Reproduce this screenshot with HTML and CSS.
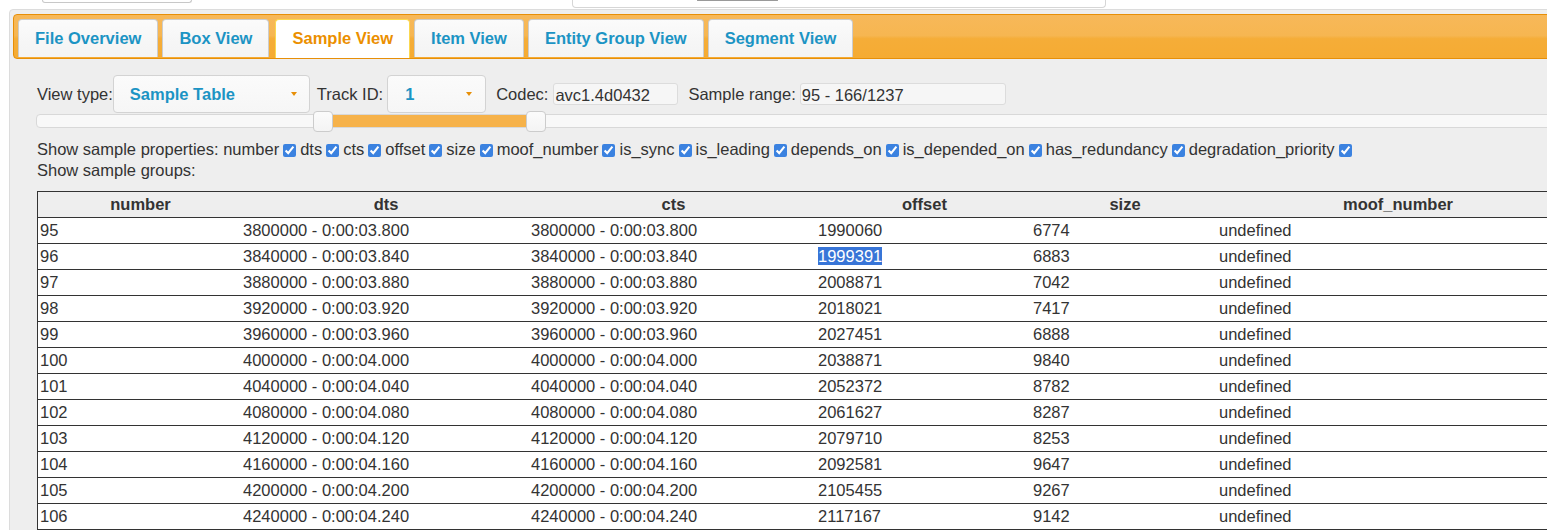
FILE: index.html
```html
<!DOCTYPE html>
<html>
<head>
<meta charset="utf-8">
<title>Sample View</title>
<link rel="stylesheet" href="styles.css">
</head>
<body>
<div class="topstrip">
  <div class="stub1"></div>
  <div class="stub2"><div class="stub2-inner"></div></div>
</div>
<div class="widget">
  <div class="tabs-header">
    <div class="tab">File Overview</div>
    <div class="tab">Box View</div>
    <div class="tab active">Sample View</div>
    <div class="tab">Item View</div>
    <div class="tab">Entity Group View</div>
    <div class="tab">Segment View</div>
  </div>
  <div class="panel">
    <div class="controls">
      <span class="lbl">View type:</span>
      <div class="select sel-view"><span>Sample Table</span><span class="tri"></span></div>
      <span class="lbl lbl-track">Track ID:</span>
      <div class="select sel-track"><span>1</span><span class="tri"></span></div>
      <span class="lbl lbl-codec">Codec:</span>
      <div class="field f-codec">avc1.4d0432</div>
      <span class="lbl lbl-range">Sample range:</span>
      <div class="field f-range">95 - 166/1237</div>
    </div>
    <div class="slider">
      <div class="sl-pre"></div>
      <div class="handle"></div>
      <div class="sl-range"></div>
      <div class="handle"></div>
    </div>
    <div class="props">
      <div class="prop-line">Show sample properties: <span>number<input type="checkbox" checked></span><span>dts<input type="checkbox" checked></span><span>cts<input type="checkbox" checked></span><span>offset<input type="checkbox" checked></span><span>size<input type="checkbox" checked></span><span>moof_number<input type="checkbox" checked></span><span>is_sync<input type="checkbox" checked></span><span>is_leading<input type="checkbox" checked></span><span>depends_on<input type="checkbox" checked></span><span>is_depended_on<input type="checkbox" checked></span><span>has_redundancy<input type="checkbox" checked></span><span>degradation_priority<input type="checkbox" checked></span></div>
      <div class="prop-line">Show sample groups:</div>
    </div>
    <table class="samples">
      <thead>
        <tr><th class="c-num">number</th><th class="c-dts">dts</th><th class="c-cts">cts</th><th class="c-off">offset</th><th class="c-size">size</th><th class="c-moof">moof_number</th></tr>
      </thead>
      <tbody>
        <tr><td>95</td><td>3800000 - 0:00:03.800</td><td>3800000 - 0:00:03.800</td><td>1990060</td><td>6774</td><td>undefined</td></tr>
        <tr><td>96</td><td>3840000 - 0:00:03.840</td><td>3840000 - 0:00:03.840</td><td><span class="sel">1999391</span></td><td>6883</td><td>undefined</td></tr>
        <tr><td>97</td><td>3880000 - 0:00:03.880</td><td>3880000 - 0:00:03.880</td><td>2008871</td><td>7042</td><td>undefined</td></tr>
        <tr><td>98</td><td>3920000 - 0:00:03.920</td><td>3920000 - 0:00:03.920</td><td>2018021</td><td>7417</td><td>undefined</td></tr>
        <tr><td>99</td><td>3960000 - 0:00:03.960</td><td>3960000 - 0:00:03.960</td><td>2027451</td><td>6888</td><td>undefined</td></tr>
        <tr><td>100</td><td>4000000 - 0:00:04.000</td><td>4000000 - 0:00:04.000</td><td>2038871</td><td>9840</td><td>undefined</td></tr>
        <tr><td>101</td><td>4040000 - 0:00:04.040</td><td>4040000 - 0:00:04.040</td><td>2052372</td><td>8782</td><td>undefined</td></tr>
        <tr><td>102</td><td>4080000 - 0:00:04.080</td><td>4080000 - 0:00:04.080</td><td>2061627</td><td>8287</td><td>undefined</td></tr>
        <tr><td>103</td><td>4120000 - 0:00:04.120</td><td>4120000 - 0:00:04.120</td><td>2079710</td><td>8253</td><td>undefined</td></tr>
        <tr><td>104</td><td>4160000 - 0:00:04.160</td><td>4160000 - 0:00:04.160</td><td>2092581</td><td>9647</td><td>undefined</td></tr>
        <tr><td>105</td><td>4200000 - 0:00:04.200</td><td>4200000 - 0:00:04.200</td><td>2105455</td><td>9267</td><td>undefined</td></tr>
        <tr><td>106</td><td>4240000 - 0:00:04.240</td><td>4240000 - 0:00:04.240</td><td>2117167</td><td>9142</td><td>undefined</td></tr>
      </tbody>
    </table>
  </div>
</div>
</body>
</html>
```
FILE: styles.css
```css
html, body {
  margin: 0;
  padding: 0;
}
body {
  width: 1547px;
  height: 530px;
  overflow: hidden;
  background: #fff;
  font-family: "Liberation Sans", Arial, sans-serif;
  font-size: 16.5px;
  color: #333;
}
.topstrip {
  height: 9px;
  display: flex;
  align-items: flex-start;
}
.stub1 {
  margin-left: 42px;
  width: 148px;
  height: 2px;
  border: 1px solid #c8c8c8;
  border-top: none;
  border-radius: 0 0 4px 4px;
}
.stub2 {
  margin-left: 380px;
  width: 532px;
  height: 7px;
  border: 1px solid #d6d6d6;
  border-top: none;
  border-radius: 0 0 4px 4px;
  display: flex;
  align-items: flex-start;
}
.stub2-inner {
  margin-left: 124px;
  width: 79px;
  height: 0;
  border: 1px solid #999;
  border-top: none;
  border-radius: 0 0 2px 2px;
}
.widget {
  margin-left: 9px;
  width: 1700px;
  height: 560px;
  border: 1px solid #dcdcdc;
  border-radius: 4px;
  background: #eee;
  padding: 4px 0 0 3px;
}
.tabs-header {
  display: flex;
  gap: 4px;
  height: 39px;
  padding: 4px 0 0 4px;
  border: 1px solid #e78f08;
  border-radius: 4px;
  background: linear-gradient(to bottom, #f7b859 0%, #f6b651 48%, #f5ad38 55%, #f5ab33 100%);
}
.tab {
  height: 38px;
  line-height: 37px;
  padding: 0 16px;
  border: 1px solid #ccc;
  border-bottom: none;
  border-radius: 4px 4px 0 0;
  background: linear-gradient(to bottom, #fbfbfb 0%, #f6f6f6 60%, #f4f4f4 100%);
  color: #1c94c4;
  font-weight: bold;
  white-space: nowrap;
  box-sizing: border-box;
}
.tab.active {
  background: #fff;
  border-color: #fbd850;
  color: #eb8f00;
  height: 39px;
  margin-left: 2px;
}
.panel {
  padding: 16px 0 0 24px;
}
.controls {
  display: flex;
  align-items: center;
  height: 38px;
}
.lbl {
  white-space: nowrap;
  padding-top: 1px;
}
.select {
  height: 38px;
  box-sizing: border-box;
  border: 1px solid #d3d3d3;
  border-radius: 4px;
  background: linear-gradient(to bottom, #fbfbfb, #f6f6f6);
  display: flex;
  align-items: center;
  justify-content: space-between;
  color: #1c94c4;
  font-weight: bold;
  padding: 0 12px 0 16px;
  margin-left: 0;
}
.sel-view { width: 197px; }
.sel-track { width: 99px; margin-left: 4px; padding-left: 17px; padding-right: 13px; }
.lbl-track { margin-left: 7px; }
.lbl-codec { margin-left: 10px; }
.lbl-range { margin-left: 10px; }
.tri {
  width: 0;
  height: 0;
  border-left: 3.5px solid transparent;
  border-right: 3.5px solid transparent;
  border-top: 4px solid #e78f08;
}
.field {
  height: 22px;
  line-height: 22px;
  box-sizing: border-box;
  border: 1px solid #dcdcdc;
  border-radius: 3px;
  background: #f6f6f6;
  padding-left: 1px;
  margin-left: 5px;
  white-space: nowrap;
}
.f-codec { width: 125px; }
.f-range { width: 206px; margin-left: 4px; }
.slider {
  margin: 1px 0 0 -1px;
  width: 1650px;
  height: 14px;
  box-sizing: border-box;
  border: 1px solid #d8d8d8;
  border-radius: 4px;
  background: #f8f8f8;
  display: flex;
  align-items: center;
}
.sl-pre { width: 276px; }
.handle {
  width: 20px;
  height: 21px;
  flex: none;
  box-sizing: border-box;
  border: 1px solid #ccc;
  border-radius: 4px;
  background: linear-gradient(to bottom, #fbfbfb, #f4f4f4);
}
.sl-range {
  width: 193px;
  height: 12px;
  background: #f6b24a;
}
.props {
  margin-top: 11px;
  line-height: 21px;
}
.prop-line {
  white-space: nowrap;
  height: 21px;
}
.prop-line input {
  width: 13px;
  height: 13px;
  margin: 0 4px 0 4px;
  vertical-align: -2px;
  accent-color: #3b82e0;
}
.samples {
  margin-top: 10px;
  border-collapse: separate;
  border-spacing: 0;
  table-layout: fixed;
  width: 1540px;
  background: #fff;
}
.samples th,
.samples td {
  box-sizing: border-box;
  line-height: 25px;
  height: 26px;
  padding: 0 0 0 2px;
  border-bottom: 1px solid #333;
  text-align: left;
  white-space: nowrap;
  overflow: hidden;
}
.samples th {
  background: #eee;
  text-align: center;
  font-weight: bold;
  border-top: 1px solid #333;
  height: 27px;
}
.samples th:first-child,
.samples td:first-child {
  border-left: 1px solid #333;
}
.c-num { width: 204px; }
.c-dts { width: 288px; }
.c-cts { width: 287px; }
.c-off { width: 215px; }
.c-size { width: 186px; }
.c-moof { width: 360px; }
.sel {
  background: #3875d7;
  color: #fff;
}
```
